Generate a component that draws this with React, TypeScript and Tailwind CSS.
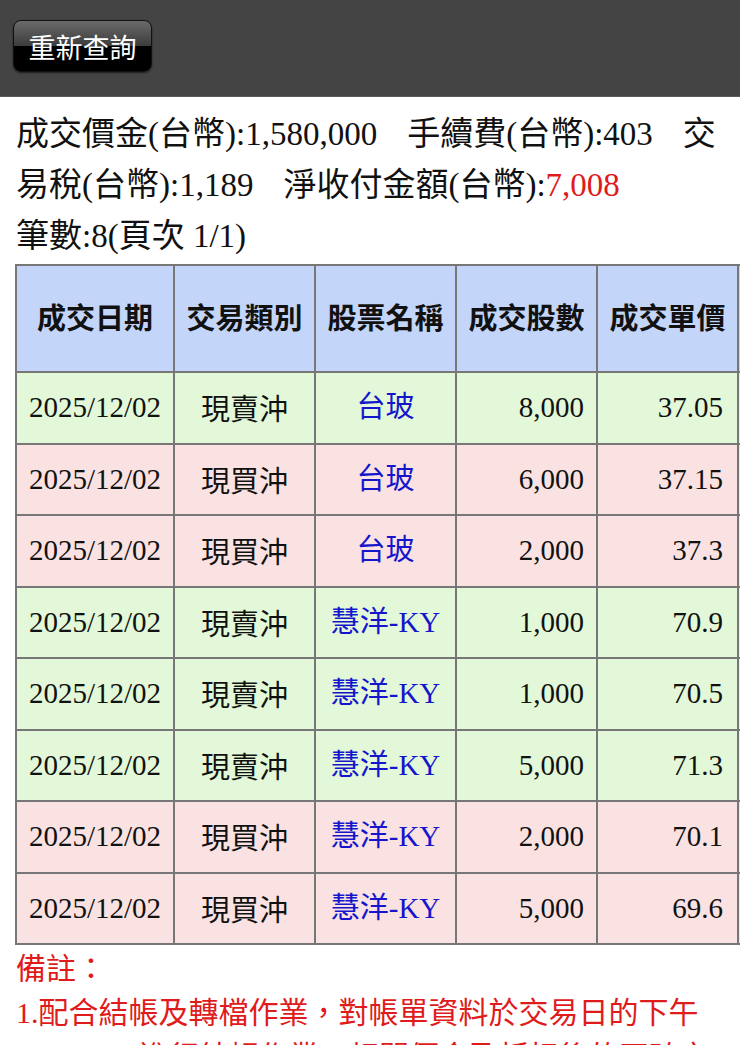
const rows = [
  { date: "2025/12/02", type: "現賣沖", name: "台玻", qty: "8,000", price: "37.05" },
  { date: "2025/12/02", type: "現買沖", name: "台玻", qty: "6,000", price: "37.15" },
  { date: "2025/12/02", type: "現買沖", name: "台玻", qty: "2,000", price: "37.3" },
  { date: "2025/12/02", type: "現賣沖", name: "慧洋-KY", qty: "1,000", price: "70.9" },
  { date: "2025/12/02", type: "現賣沖", name: "慧洋-KY", qty: "1,000", price: "70.5" },
  { date: "2025/12/02", type: "現賣沖", name: "慧洋-KY", qty: "5,000", price: "71.3" },
  { date: "2025/12/02", type: "現買沖", name: "慧洋-KY", qty: "2,000", price: "70.1" },
  { date: "2025/12/02", type: "現買沖", name: "慧洋-KY", qty: "5,000", price: "69.6" },
];

const serif = "font-['Liberation_Serif','Noto_Sans_CJK_TC',serif]";
const sans = "font-['Noto_Sans_CJK_TC','Noto_Sans',sans-serif]";

function Gap() {
  return <span className="inline-block w-[30px]"> </span>;
}

export default function App() {
  return (
    <div className={`w-[740px] overflow-hidden bg-white text-[#111] ${serif}`}>
      {/* top bar */}
      <div className="h-[97px] bg-[#444444] border-b border-[#5a5a5a] pt-[20px] pl-[13px]">
        <button
          className={`w-[139px] h-[52px] rounded-[8px] border border-[#111] bg-[linear-gradient(to_bottom,#6a6a6a_0%,#3c3c3c_50%,#000_50%,#000_100%)] text-white text-[27px] leading-none shadow-[0_1px_2px_rgba(0,0,0,0.6)] ${sans}`}
        >
          重新查詢
        </button>
      </div>

      {/* summary */}
      <div className="px-[16px] pt-[12px] text-[33px] leading-[51px]">
        成交價金(台幣):1,580,000<Gap />手續費(台幣):403<Gap />交易稅(台幣):1,189<Gap />淨收付金額(台幣):
        <span className="text-[#e01b1b]">7,008</span>
        <br />
        筆數:8(頁次 1/1)
      </div>

      {/* table */}
      <div className="pl-[15px] pt-[2px]">
        <table className="w-[880px] table-fixed border-collapse border-2 border-[#555] text-[29px]">
          <colgroup>
            <col className="w-[158px]" />
            <col className="w-[141px]" />
            <col className="w-[141px]" />
            <col className="w-[141px]" />
            <col className="w-[141px]" />
            <col className="w-[158px]" />
          </colgroup>
          <thead>
            <tr className="h-[107px] bg-[#c3d5f8]">
              {["成交日期", "交易類別", "股票名稱", "成交股數", "成交單價", "成交價金"].map((h) => (
                <th key={h} className={`border-2 border-[#777] font-bold whitespace-nowrap pb-[4px] ${sans}`}>
                  {h}
                </th>
              ))}
            </tr>
          </thead>
          <tbody>
            {rows.map((r, i) => {
              const bg = r.type === "現賣沖" ? "bg-[#e2f8d8]" : "bg-[#fae2e2]";
              return (
                <tr key={i} className={`h-[71.5px] ${bg}`}>
                  <td className="border-2 border-[#777] text-center whitespace-nowrap">{r.date}</td>
                  <td className={`border-2 border-[#777] text-center ${sans}`}>{r.type}</td>
                  <td className="border-2 border-[#777] text-center text-[#1515cc] whitespace-nowrap">{r.name}</td>
                  <td className="border-2 border-[#777] text-right pr-[12px]">{r.qty}</td>
                  <td className="border-2 border-[#777] text-right pr-[14px]">{r.price}</td>
                  <td className="border-2 border-[#777] text-right pr-[12px]">0</td>
                </tr>
              );
            })}
          </tbody>
        </table>
      </div>

      {/* remarks */}
      <div className="px-[16px] pt-[2px] text-[30px] leading-[44px] text-[#e01b1b]">
        <div>備註：</div>
        <div>
          1.配合結帳及轉檔作業，對帳單資料於交易日的下午6:00~7:00進行結帳作業，相關價金及折扣後的正確交易資料請於結帳後查詢。
        </div>
      </div>
    </div>
  );
}
